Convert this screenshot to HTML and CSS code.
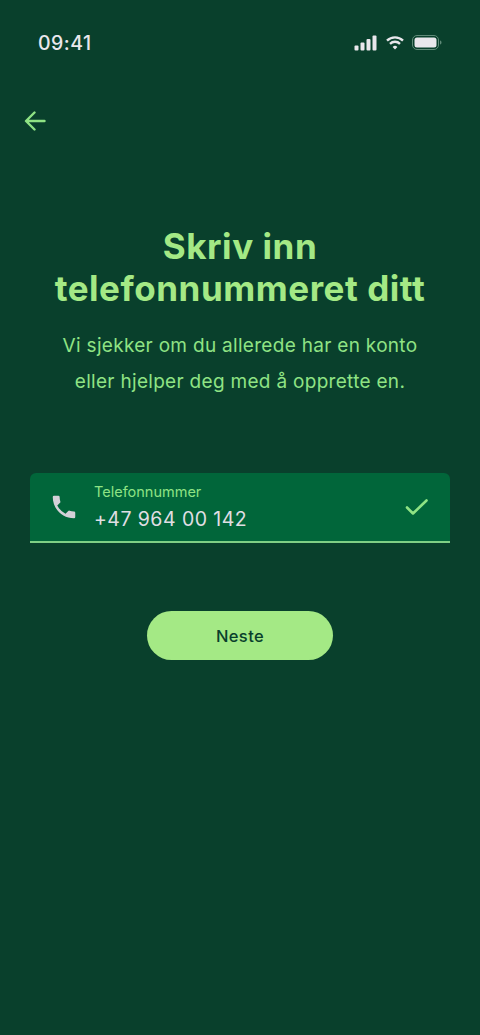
FILE: index.html
```html
<!DOCTYPE html>
<html lang="nb">
<head>
<meta charset="utf-8">
<title>Telefonnummer</title>
<link rel="stylesheet" href="styles.css">
</head>
<body>
<main class="screen">
  <header class="status">
    <span class="time">09:41</span>
    <div class="status-icons">
      <svg class="signal" width="24" height="16" viewBox="0 0 24 16" aria-hidden="true"><rect x="0.5" y="10.5" width="4" height="5" rx="1"/><rect x="6.5" y="7.5" width="4" height="8" rx="1"/><rect x="12.5" y="4" width="4" height="11.5" rx="1"/><rect x="18.5" y="0.5" width="4" height="15" rx="1"/></svg>
      <svg class="wifi" width="18" height="14" viewBox="0 0 18 14" aria-hidden="true"><path d="M1 4.6a11.5 11.5 0 0 1 16 0" /><path d="M4 7.8a7.2 7.2 0 0 1 10 0" /><path class="wifi-dot" d="M9 13.6 6.6 11a3.4 3.4 0 0 1 4.8 0z"/></svg>
      <svg class="battery" width="30" height="15" viewBox="0 0 30 15" aria-hidden="true"><rect class="batt-outline" x="0.5" y="0.5" width="26" height="14" rx="4.5"/><rect class="batt-fill" x="2.5" y="2.5" width="22" height="10" rx="2.5"/><path class="batt-cap" d="M28 5.5c1 .3 1.5 1 1.5 2s-.5 1.7-1.5 2z"/></svg>
    </div>
  </header>
  <nav class="nav">
    <svg class="back" width="22" height="20" viewBox="0 0 22 20" aria-hidden="true"><path d="M20.5 10H2.5M10.5 1.5 2 10l8.500 8.500"/></svg>
  </nav>
  <section class="intro">
    <h1 class="title">Skriv inn<br>telefonnummeret ditt</h1>
    <p class="lead">Vi sjekker om du allerede har en konto<br>eller hjelper deg med å opprette en.</p>
  </section>
  <div class="field">
    <svg class="phone" width="30" height="30" viewBox="0 0 24 24" aria-hidden="true"><path d="M6.620 10.790a15.050 15.050 0 0 0 6.590 6.590l2.200-2.200a1 1 0 0 1 1.020-.24c1.120.37 2.330.57 3.570.57a1 1 0 0 1 1 1V20a1 1 0 0 1-1 1C10.610 21 3 13.390 3 4a1 1 0 0 1 1-1h3.500a1 1 0 0 1 1 1c0 1.250.2 2.450.57 3.570a1 1 0 0 1-.25 1.020z"/></svg>
    <div class="field-text">
      <span class="field-label">Telefonnummer</span>
      <span class="field-value">+47 964 00 142</span>
    </div>
    <svg class="check" width="26" height="22" viewBox="0 0 26 22" aria-hidden="true"><path d="M3 11.500 9 17.500 22.500 4.500"/></svg>
  </div>
  <div class="actions">
    <button class="next" type="button">Neste</button>
  </div>
</main>
</body>
</html>
```
FILE: styles.css
```css
* { box-sizing: border-box; }
html, body { margin: 0; padding: 0; height: 100%; }
body {
  background: #09402c;
  font-family: Inter, "Liberation Sans", sans-serif;
  overflow: hidden;
}
.screen { width: 480px; height: 1035px; display: flex; flex-direction: column; background: #09402c; }
.status {
  height: 85px;
  padding: 0 38px 0 38px;
  display: flex;
  align-items: center;
  justify-content: space-between;
}
.time { color: #e9e7ec; font-size: 19.500px; font-weight: 500; letter-spacing: 0.5px; }
.status-icons { display: flex; align-items: center; gap: 8px; }
.signal { fill: #e9e7ec; }
.wifi { fill: none; stroke: #e9e7ec; stroke-width: 2.400px; }
.wifi-dot { fill: #e9e7ec; stroke: none; }
.batt-outline { fill: none; stroke: #5f8a78; stroke-width: 1; }
.batt-fill { fill: #e9e7ec; }
.batt-cap { fill: #5f8a78; }
.nav { height: 71px; padding: 0 0 0 24px; display: flex; align-items: center; }
.back { fill: none; stroke: #8fe384; stroke-width: 2.400px; stroke-linecap: round; stroke-linejoin: round; }
.intro { padding-top: 69px; text-align: center; }
.title {
  margin: 0;
  color: #a4e985;
  font-size: 35px;
  line-height: 42px;
  font-weight: 650;
  letter-spacing: 0.55px;
}
.lead {
  margin: 18.500px 0 0;
  color: #8fe384;
  font-size: 19px;
  line-height: 36px;
  font-weight: 400;
  letter-spacing: 0.3px;
}
.field {
  margin: 73.500px 30px 0;
  height: 70px;
  display: flex;
  align-items: center;
  background: #01663a;
  border-bottom: 2px solid #7fcf85;
  border-radius: 6px 6px 0 0;
  padding: 0 20px 0 19px;
}
.phone { fill: #d4d1d8; flex: none; }
.field-text { flex: 1; display: flex; flex-direction: column; gap: 2px; margin-left: 15px; padding-top: 3px; }
.field-label { color: #8fe384; font-size: 14.500px; line-height: 20px; }
.field-value { color: #e0dfe4; font-size: 19.500px; line-height: 31px; letter-spacing: 0.45px; }
.check { fill: none; stroke: #8fe384; stroke-width: 2.600px; stroke-linecap: round; stroke-linejoin: round; flex: none; }
.actions { display: flex; justify-content: center; padding-top: 68px; }
.next {
  width: 186px;
  height: 49px;
  border: none;
  border-radius: 25px;
  background: #a4e985;
  color: #09402c;
  font-family: inherit;
  font-size: 16.500px;
  font-weight: 500;
  letter-spacing: 0.4px;
}
```
